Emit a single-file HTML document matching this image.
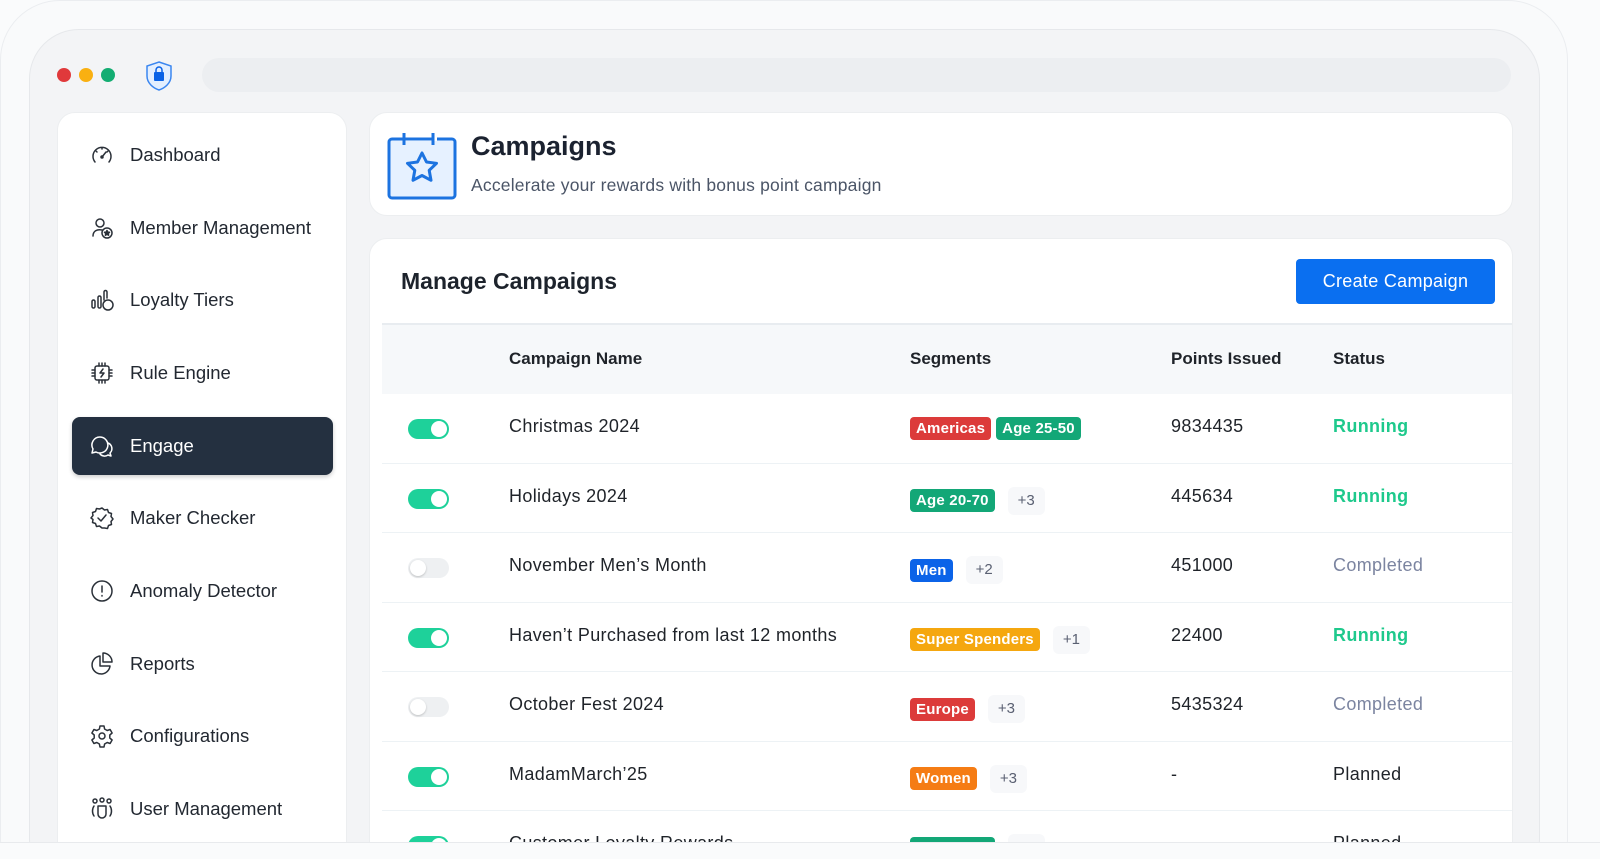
<!DOCTYPE html>
<html><head><meta charset="utf-8"><style>
*{box-sizing:border-box;margin:0;padding:0}
html,body{width:1600px;height:859px;overflow:hidden;background:#fafbfc}
body{font-family:"Liberation Sans",sans-serif;color:#1f2329}
#w{position:relative;width:1600px;height:859px;overflow:hidden}
.outer{position:absolute;left:0;top:0;width:1568px;height:900px;border:1px solid #ebedf0;border-radius:60px;background:#f9fafb}
.inner{position:absolute;left:29px;top:29px;width:1511px;height:860px;border:1px solid #e6e8eb;border-radius:50px;background:#f3f4f6}
.dot{position:absolute;top:68px;width:14px;height:14px;border-radius:50%}
.url{position:absolute;left:202px;top:58px;width:1309px;height:34px;border-radius:17px;background:#eceef1}
.side{position:absolute;left:57px;top:112px;width:290px;height:760px;background:#fff;border-radius:18px;border:1px solid #eceef0}
.item{position:absolute;left:14px;width:261px;height:58px;border-radius:8px;display:flex;align-items:center;padding-left:18px;font-size:18.5px;color:#222831}
.item svg{width:24px;height:24px;margin-right:16px;fill:none;stroke:#2b3139;stroke-width:1.5;stroke-linecap:round;stroke-linejoin:round}
.item.act{background:#243040;color:#fff;box-shadow:0 2px 4px rgba(0,0,0,.2)}
.item.act svg{stroke:#fff}
.hdr{position:absolute;left:369px;top:112px;width:1144px;height:104px;background:#fff;border-radius:18px;border:1px solid #eceef0}
.main{position:absolute;left:369px;top:238px;width:1144px;height:640px;background:#fff;border-radius:18px;border:1px solid #eceef0;overflow:hidden}
.btn{position:absolute;right:17px;top:20px;width:199px;height:45px;background:#0a6ff0;border-radius:4px;color:#fff;font-size:18px;display:flex;align-items:center;justify-content:center;letter-spacing:.3px}
.th{position:absolute;left:12px;top:84px;width:1132px;height:71px;background:#f6f8fa;border-top:2px solid #e8ecf0}
.th span{position:absolute;top:24px;font-size:17px;font-weight:bold}
.row{position:absolute;left:12px;width:1132px;height:69.5px;border-bottom:1px solid #edf2f5}
.row .c{position:absolute;top:22px;font-size:18px;letter-spacing:.35px}
.tg{position:absolute;left:26px;top:25px;width:41px;height:20px;border-radius:10px;background:#1ed19a}
.tg::after{content:"";position:absolute;right:2px;top:2px;width:16px;height:16px;border-radius:50%;background:#fff}
.tg.off{background:#eef0f2}
.tg.off::after{left:2px;right:auto;box-shadow:0 1px 2px rgba(0,0,0,.2)}
.seg{position:absolute;left:528px;top:23px;display:flex;gap:5px;align-items:center}
.b{height:23px;padding:0 6px;border-radius:4px;color:#fff;font-size:15px;line-height:23px;font-weight:bold;letter-spacing:.2px}
.more{height:28px;padding:0 10px;border-radius:6px;background:#f7f8fa;color:#5a6072;font-size:15px;line-height:28px;margin-left:8px}
.run{color:#1ec98c;font-weight:bold}
.done{color:#7b84a0}
</style></head><body><div id="w">
<div class="outer"></div>
<div class="inner"></div>
<div class="dot" style="left:57px;background:#e0393b"></div>
<div class="dot" style="left:79px;background:#f9b011"></div>
<div class="dot" style="left:101px;background:#13ad72"></div>
<svg style="position:absolute;left:144px;top:60px" width="30" height="32" viewBox="0 0 30 32"><path d="M15 2 L27 6 V16 C27 23 21 28 15 30 C9 28 3 23 3 16 V6 Z" fill="#e3efff" stroke="#3a86f0" stroke-width="1.5"/><rect x="10" y="12" width="10" height="9" rx="1" fill="#0a62e6"/><path d="M12 12 V10 a3 3 0 0 1 6 0 V12" fill="none" stroke="#0a62e6" stroke-width="1.5"/></svg>
<div class="url"></div>

<div class="side">
<div class="item" style="top:13px"><svg viewBox="0 0 24 24"><path d="M5 19 A9 9 0 1 1 19 19"/><path d="M12 14 L16 9"/><circle cx="12" cy="14" r="1"/><path d="M12 5v1M6 8l1 1M18 8l-1 1"/></svg>Dashboard</div>
<div class="item" style="top:86px"><svg viewBox="0 0 24 24"><circle cx="10" cy="7" r="4"/><path d="M3 20 C3 15 7 13 12 14"/><circle cx="17" cy="17" r="5"/><path d="M17 14.5l.8 1.6 1.7.2-1.3 1.2.4 1.7-1.6-.9-1.6.9.4-1.7-1.3-1.2 1.7-.2z" fill="#2b3139"/></svg>Member Management</div>
<div class="item" style="top:158px"><svg viewBox="0 0 24 24"><rect x="2" y="12" width="3" height="8" rx="1.5"/><rect x="8" y="8" width="3" height="12" rx="1.5"/><path d="M14 12V4a1.5 1.5 0 0 1 3 0v6"/><circle cx="18" cy="17" r="5"/></svg>Loyalty Tiers</div>
<div class="item" style="top:231px"><svg viewBox="0 0 24 24"><rect x="5" y="5" width="14" height="14" rx="2"/><path d="M13 8l-3 4h4l-3 4"/><path d="M9 2v3M12 2v3M15 2v3M9 19v3M12 19v3M15 19v3M2 9h3M2 12h3M2 15h3M19 9h3M19 12h3M19 15h3"/></svg>Rule Engine</div>
<div class="item act" style="top:304px"><svg viewBox="0 0 24 24"><path d="M10 3a8 8 0 0 0-7 12l-1 4 4-1a8 8 0 1 0 4-15z"/><path d="M18 9a6 6 0 0 1 2 10l1 3-3-1a6 6 0 0 1-8-1"/></svg>Engage</div>
<div class="item" style="top:376px"><svg viewBox="0 0 24 24"><path d="M12 2l2.5 2 3-.5 1 3 3 1-.5 3 2 2.5-2 2.5.5 3-3 1-1 3-3-.5L12 22l-2.5-2-3 .5-1-3-3-1 .5-3L1 12l2-2.5-.5-3 3-1 1-3 3 .5z"/><path d="M8 12l3 3 5-6"/></svg>Maker Checker</div>
<div class="item" style="top:449px"><svg viewBox="0 0 24 24"><circle cx="12" cy="12" r="10"/><path d="M12 7v6M12 16.5v.5"/></svg>Anomaly Detector</div>
<div class="item" style="top:522px"><svg viewBox="0 0 24 24"><path d="M10 4a9 9 0 1 0 10 10H10z"/><path d="M13 1a9 9 0 0 1 9 9h-9z"/></svg>Reports</div>
<div class="item" style="top:594px"><svg viewBox="0 0 24 24"><circle cx="12" cy="12" r="3"/><path d="M10 2h4l.6 3 2.6 1.5 2.9-1 2 3.5-2.3 2v3l2.3 2-2 3.5-2.9-1-2.6 1.5-.6 3h-4l-.6-3-2.6-1.5-2.9 1-2-3.5 2.3-2v-3l-2.3-2 2-3.5 2.9 1L9.4 5z"/></svg>Configurations</div>
<div class="item" style="top:667px"><svg viewBox="0 0 24 24"><circle cx="5" cy="4" r="2"/><circle cx="12" cy="3" r="2"/><circle cx="19" cy="4" r="2"/><path d="M8 9h8v8a4 4 0 0 1-8 0z"/><path d="M4 9c-2 3-2 7 0 10M20 9c2 3 2 7 0 10"/></svg>User Management</div>
</div>

<div class="hdr">
<svg style="position:absolute;left:17px;top:18px" width="70" height="70" viewBox="0 0 70 70"><rect x="2" y="8" width="66" height="59" rx="3" fill="#e6f1ff" stroke="#1c73e0" stroke-width="3"/><rect x="16" y="0" width="34" height="10" fill="#fff"/><path d="M17 2v12M17 8h29M46 2v12" stroke="#1c73e0" stroke-width="3" fill="none"/><path d="M35 22l4.5 9 10 1.3-7.3 7 1.8 10-9-4.8-9 4.8 1.8-10-7.3-7 10-1.3z" fill="none" stroke="#1c73e0" stroke-width="3" stroke-linejoin="round"/></svg>
<div style="position:absolute;left:101px;top:18px;font-size:27px;font-weight:bold;color:#1b2230">Campaigns</div>
<div style="position:absolute;left:101px;top:62px;font-size:17.5px;color:#4b5567;letter-spacing:.2px">Accelerate your rewards with bonus point campaign</div>
</div>

<div class="main">
<div style="position:absolute;left:31px;top:29px;font-size:23px;font-weight:bold;color:#1d232c">Manage Campaigns</div>
<div class="btn">Create Campaign</div>
<div class="th"><span style="left:127px">Campaign Name</span><span style="left:528px">Segments</span><span style="left:789px">Points Issued</span><span style="left:951px">Status</span></div>
<div class="row" style="top:155px"><div class="tg"></div><div class="c" style="left:127px">Christmas 2024</div><div class="seg"><span class="b" style="background:#dc3b3a">Americas</span><span class="b" style="background:#13a777">Age 25-50</span></div><div class="c" style="left:789px">9834435</div><div class="c run" style="left:951px">Running</div></div>
<div class="row" style="top:224.5px"><div class="tg"></div><div class="c" style="left:127px">Holidays 2024</div><div class="seg"><span class="b" style="background:#13a777">Age 20-70</span><span class="more">+3</span></div><div class="c" style="left:789px">445634</div><div class="c run" style="left:951px">Running</div></div>
<div class="row" style="top:294px"><div class="tg off"></div><div class="c" style="left:127px">November Men’s Month</div><div class="seg"><span class="b" style="background:#0b63e8">Men</span><span class="more">+2</span></div><div class="c" style="left:789px">451000</div><div class="c done" style="left:951px">Completed</div></div>
<div class="row" style="top:363.5px"><div class="tg"></div><div class="c" style="left:127px">Haven’t Purchased from last 12 months</div><div class="seg"><span class="b" style="background:#f5a70f">Super Spenders</span><span class="more">+1</span></div><div class="c" style="left:789px">22400</div><div class="c run" style="left:951px">Running</div></div>
<div class="row" style="top:433px"><div class="tg off"></div><div class="c" style="left:127px">October Fest 2024</div><div class="seg"><span class="b" style="background:#dc3b3a">Europe</span><span class="more">+3</span></div><div class="c" style="left:789px">5435324</div><div class="c done" style="left:951px">Completed</div></div>
<div class="row" style="top:502.5px"><div class="tg"></div><div class="c" style="left:127px">MadamMarch’25</div><div class="seg"><span class="b" style="background:#f57c14">Women</span><span class="more">+3</span></div><div class="c" style="left:789px">-</div><div class="c" style="left:951px">Planned</div></div>
<div class="row" style="top:572px"><div class="tg"></div><div class="c" style="left:127px">Customer Loyalty Rewards</div><div class="seg"><span class="b" style="background:#13a777">Age 25-50</span><span class="more">+2</span></div><div class="c" style="left:789px">-</div><div class="c" style="left:951px">Planned</div></div>
</div>
<div style="position:absolute;left:0;top:842px;width:1600px;height:17px;background:#fafbfc;border-top:1px solid #e8eaed"></div>
</div></body></html>
